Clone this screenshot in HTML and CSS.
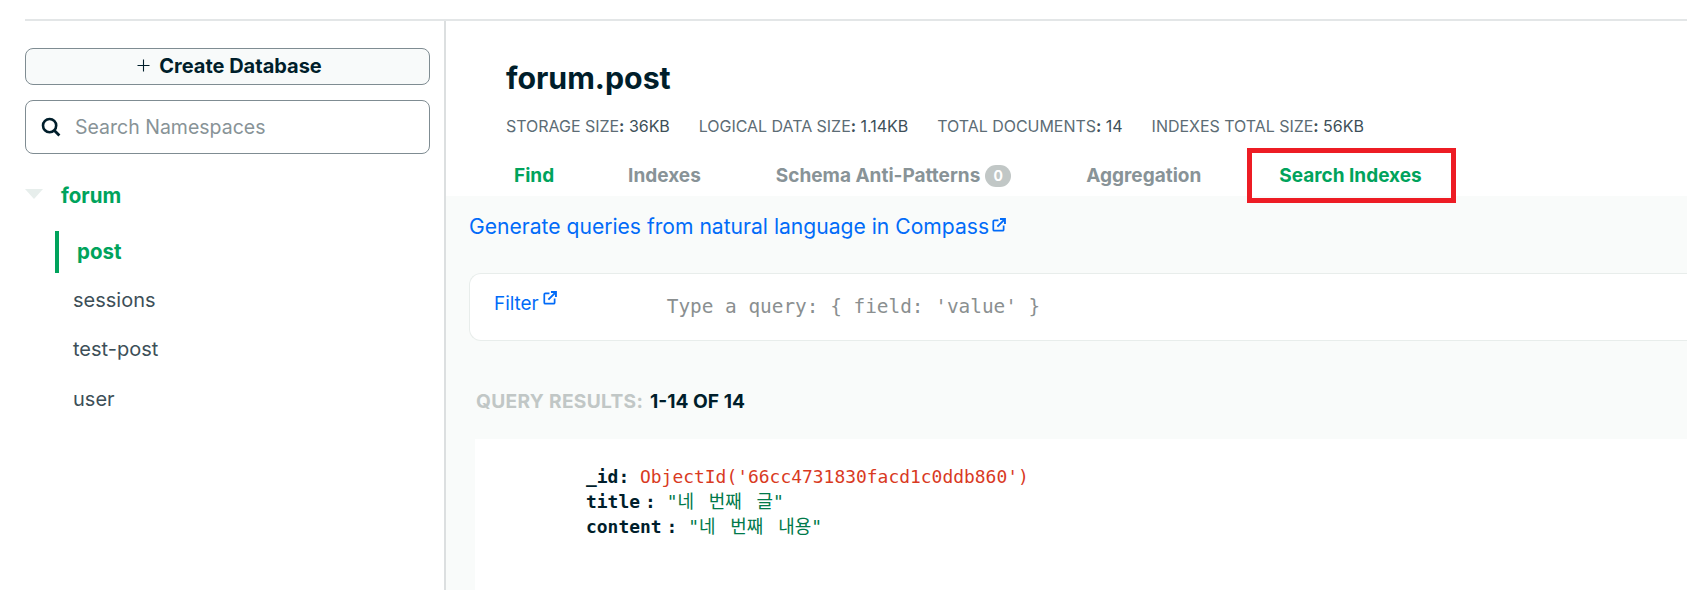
FILE: index.html
```html
<!DOCTYPE html>
<html lang="en">
<head>
<meta charset="utf-8">
<title>forum.post</title>
<link rel="stylesheet" href="styles.css">
</head>
<body>
<div class="page">
  <aside class="sidebar">
    <button class="create-btn"><svg class="plus" width="13" height="13" viewBox="0 0 13 13"><path d="M6.5 0.5v12M0.5 6.5h12" stroke="#001e2b" stroke-width="1.1" fill="none"/></svg><span>Create Database</span></button>
    <div class="search">
      <svg class="search-icon" width="20" height="20" viewBox="0 0 20 20"><circle cx="8.6" cy="8.6" r="6.6" stroke="#001e2b" stroke-width="2.6" fill="none"/><path d="M13.4 13.4l5 5" stroke="#001e2b" stroke-width="2.8" fill="none"/></svg>
      <span class="search-text">Search Namespaces</span>
    </div>
    <div class="db-row"><span class="caret"></span><span class="db-name">forum</span></div>
    <div class="coll active">post</div>
    <ul class="coll-list">
      <li>sessions</li>
      <li>test-post</li>
      <li>user</li>
    </ul>
  </aside>
  <main class="main">
    <header class="head">
      <h1 class="title">forum.post</h1>
      <div class="stats">
        <span class="stat">STORAGE SIZE<b>:</b> <em>36KB</em></span>
        <span class="stat">LOGICAL DATA SIZE<b>:</b> <em>1.14KB</em></span>
        <span class="stat">TOTAL DOCUMENTS<b>:</b> <em>14</em></span>
        <span class="stat">INDEXES TOTAL SIZE<b>:</b> <em>56KB</em></span>
      </div>
      <nav class="tabs">
        <span class="tab tab-find">Find</span>
        <span class="tab tab-indexes">Indexes</span>
        <span class="tab tab-schema">Schema Anti-Patterns<span class="badge">0</span></span>
        <span class="tab tab-agg">Aggregation</span>
        <span class="tab tab-search">Search Indexes</span>
      </nav>
      <div class="highlight"></div>
    </header>
    <section class="content">
      <a class="compass">Generate queries from natural language in Compass<svg class="ext" width="14" height="14" viewBox="0 0 13 13"><path d="M6 2.2H2.2a1 1 0 0 0-1 1v7.6a1 1 0 0 0 1 1h7.6a1 1 0 0 0 1-1V7" stroke="#016bf8" stroke-width="1.6" fill="none"/><path d="M5 8l6-6M7.4 1h4.6v4.6" stroke="#016bf8" stroke-width="1.8" fill="none"/></svg></a>
      <div class="filter-card">
        <a class="filter-link">Filter<svg class="ext ext-filter" width="14" height="14" viewBox="0 0 13 13"><path d="M6 2.2H2.2a1 1 0 0 0-1 1v7.6a1 1 0 0 0 1 1h7.6a1 1 0 0 0 1-1V7" stroke="#016bf8" stroke-width="1.6" fill="none"/><path d="M5 8l6-6M7.4 1h4.6v4.6" stroke="#016bf8" stroke-width="1.8" fill="none"/></svg></a>
        <span class="query">Type a query: { field: 'value' }</span>
      </div>
      <div class="results-label">QUERY RESULTS: <span class="count">1-14 OF 14</span></div>
      <div class="doc">
        <div class="line"><span class="key">_id:</span> <span class="oid">ObjectId('66cc4731830facd1c0ddb860')</span></div>
        <div class="line"><span class="key">title<span class="colon">:</span></span> <span class="str">"네 번째 글"</span></div>
        <div class="line"><span class="key">content<span class="colon">:</span></span> <span class="str">"네 번째 내용"</span></div>
      </div>
    </section>
  </main>
</div>
</body>
</html>
```
FILE: styles.css
```css
* { box-sizing: border-box; }
html, body { margin: 0; height: 100%; background: #fff; overflow: hidden; }
body { font-family: "Inter", "Noto Sans", sans-serif; padding: 19px 0 0 25px; height: 590px; }
.page { display: flex; height: 571px; border-top: 2px solid #e3e6e7; }
.sidebar { width: 421px; flex: none; border-right: 2px solid #dcdfe0; padding-top: 27px; }
.create-btn { display: flex; align-items: center; justify-content: center; width: 405px; height: 37px; border: 1px solid #7f8c92; border-radius: 8px; background: #f8fafa; padding: 0 0 2px 4px; color: #001e2b; font: 700 20px "Inter", sans-serif; }
.plus { margin-right: 9px; }
.search { display: flex; align-items: center; width: 405px; height: 54px; margin-top: 15px; border: 1px solid #7f8c92; border-radius: 8px; padding-left: 15px; }
.search-text { margin-left: 14px; font-size: 19.5px; color: #889397; }
.db-row { display: flex; align-items: center; height: 30px; margin-top: 26px; }
.caret { width: 0; height: 0; border-left: 9px solid transparent; border-right: 9px solid transparent; border-top: 10px solid #e7eeec; margin-top: -2px; }
.db-name { margin-left: 18px; font-size: 20.5px; font-weight: 700; color: #00a35c; }
.coll { display: flex; align-items: center; height: 42px; margin: 21px 0 0 30px; border-left: 4px solid #00a35c; padding: 0 0 1px 18px; font-size: 20.5px; font-weight: 700; color: #00a35c; }
.coll-list { list-style: none; margin: 2px 0 0 48px; padding: 0; font-size: 20px; color: #3d4f58; }
.coll-list li { height: 49.5px; display: flex; align-items: center; }
.main { flex: 1; min-width: 0; display: flex; flex-direction: column; overflow: hidden; }
.head { flex: none; height: 175px; padding: 0 0 0 60px; position: relative; }
.title { margin: 0; padding-top: 37px; font-size: 30.3px; line-height: 40px; font-weight: 700; color: #001e2b; }
.stats { display: flex; gap: 29px; margin-top: 18px; font-size: 16px; line-height: 20px; letter-spacing: -0.03px; color: #5c6c75; }
.stat b { font-weight: 700; color: #3d4f58; }
.stat em { font-style: normal; color: #3d4f58; }
.tabs { display: flex; margin-top: 27px; font-size: 19px; font-weight: 700; color: #889397; line-height: 26px; }
.tab { display: inline-flex; align-items: center; }
.tab-find { color: #00a35c; margin-left: 8px; }
.tab-indexes { margin-left: 74px; }
.tab-schema { margin-left: 75px; }
.tab-agg { margin-left: 75px; }
.tab-search { margin-left: 78px; color: #00a35c; }
.highlight { position: absolute; left: 801px; top: 127px; width: 209px; height: 55px; border: 5px solid #ed1c24; }
.badge { display: inline-flex; align-items: center; justify-content: center; width: 26px; height: 22px; margin-left: 5px; border-radius: 11px; background: #c1c7c6; color: #fff; font-size: 14px; }
.content { flex: 1; background: #f9fbfa; padding: 16px 0 0 23px; }
.compass { display: flex; align-items: center; font-size: 21.1px; line-height: 30px; color: #016bf8; }
.compass .ext { margin: -4px 0 0 3px; }
.filter-card { display: flex; height: 68px; margin-top: 31px; background: #fff; border: 1px solid #e8edeb; border-right: 0; border-radius: 12px 0 0 12px; padding-left: 24px; }
.filter-link { font-size: 18.9px; color: #016bf8; margin-top: 17px; line-height: 24px; }
.ext-filter { margin: 0 0 0 4px; vertical-align: 5px; }
.query { margin: 20px 0 0 110px; font: 19.4px/26px "DejaVu Sans Mono", monospace; color: #8a8f90; }
.results-label { margin: 48px 0 0 7px; font-size: 19.2px; line-height: 24px; font-weight: 700; letter-spacing: 0.3px; color: #c1c7c6; }
.count { color: #001e2b; letter-spacing: 0; margin-left: 2px; }
.doc { margin: 26px 0 0 6px; height: 200px; background: #fff; padding: 25px 0 0 111px; font: 17.95px/25px "DejaVu Sans Mono", "Noto Sans CJK KR", monospace; }
.key { color: #001e2b; font-weight: 700; }
.colon { margin-left: 5px; }
.oid { color: #d93a1f; }
.str { color: #00794a; word-spacing: 4px; }
```
